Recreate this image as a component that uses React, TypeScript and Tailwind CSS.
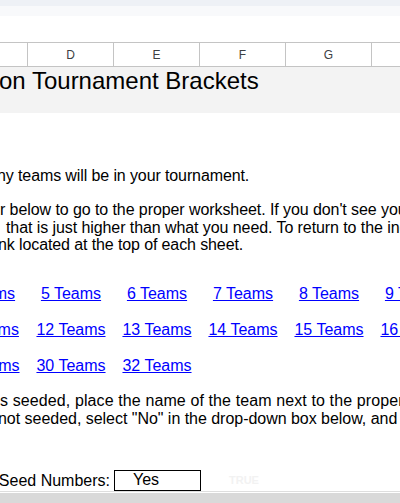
import React from "react";

const headerCols = ["", "D", "E", "F", "G", ""];

const linkRows: string[][] = [
  ["4 Teams", "5 Teams", "6 Teams", "7 Teams", "8 Teams", "9 Teams"],
  ["11 Teams", "12 Teams", "13 Teams", "14 Teams", "15 Teams", "16 Teams"],
  ["28 Teams", "30 Teams", "32 Teams", "", "", ""],
];

export default function App() {
  return (
    <div className="w-[400px] h-[503px] overflow-hidden bg-white flex flex-col font-['Liberation_Sans',Arial,sans-serif] text-black">
      {/* Toolbar bands */}
      <div className="h-[6px] shrink-0 bg-[#eef1f6]" />
      <div className="h-[10px] shrink-0 bg-[#f8f9fb]" />
      <div className="h-[26px] shrink-0 bg-white" />

      {/* Column headers */}
      <div className="h-[25px] shrink-0 flex -ml-[58px] border-y border-[#c4c4c4]">
        {headerCols.map((c, i) => (
          <div
            key={i}
            className="w-[86px] shrink-0 border-r border-[#c4c4c4] flex items-center justify-center text-[12px] text-[#3c4043]"
          >
            {c}
          </div>
        ))}
      </div>

      {/* Title row */}
      <div className="h-[46px] shrink-0 bg-[#f3f3f3]">
        <div className="-ml-[1px] whitespace-nowrap text-[24px] leading-[28px]">on Tournament Brackets</div>
      </div>

      <div className="text-[16px] whitespace-nowrap">
        <div className="mt-[54px] -ml-[3px] leading-[18px] tracking-[-0.11px]">ny teams will be in your tournament.</div>

        <div className="mt-[16px] leading-[17.7px]">
          <div className="tracking-[-0.08px]">r below to go to the proper worksheet. If you don't see your number</div>
          <div className="ml-[6px] tracking-[-0.08px]">that is just higher than what you need. To return to the index</div>
          <div className="-ml-[2px] tracking-[-0.11px]">nk located at the top of each sheet.</div>
        </div>

        {/* Links */}
        <div className="mt-[31px]">
          {linkRows.map((row, r) => (
            <div key={r} className="h-[36px] flex -ml-[58px] leading-[18px]">
              {row.map((label, i) => (
                <div key={i} className="w-[86px] shrink-0 flex justify-center">
                  {label && (
                    <a href="#" className="text-[#0000ff] underline whitespace-nowrap">
                      {label}
                    </a>
                  )}
                </div>
              ))}
            </div>
          ))}
        </div>

        <div className="-mt-[1px] leading-[18px]">
          <div className="tracking-[0.11px]">
            s seeded, place the name of the team next to the proper <span className="text-[#ff9900]">seed</span>
          </div>
          <div className="-ml-[2px] tracking-[-0.03px]">not seeded, select "No" in the drop-down box below, and the seeds</div>
        </div>

        {/* Seed numbers row */}
        <div className="mt-[42px] h-[21px] flex -ml-[58px]">
          <div className="w-[172px] shrink-0 text-right pr-[4px] leading-[21px]">Seed Numbers:</div>
          <div className="w-[87px] shrink-0 border-[1.5px] border-black pl-[18px] leading-[18px]">Yes</div>
          <div className="w-[86px] shrink-0 flex items-center justify-center text-[11px] font-bold text-[#f2f2f2]">
            TRUE
          </div>
        </div>
      </div>

      {/* Bottom bar */}
      <div className="mt-auto shrink-0 h-[1px] bg-[#dedede]" />
      <div className="shrink-0 h-[1px] bg-white" />
      <div className="shrink-0 h-[10px] bg-[#d9d9d9]" />
    </div>
  );
}
